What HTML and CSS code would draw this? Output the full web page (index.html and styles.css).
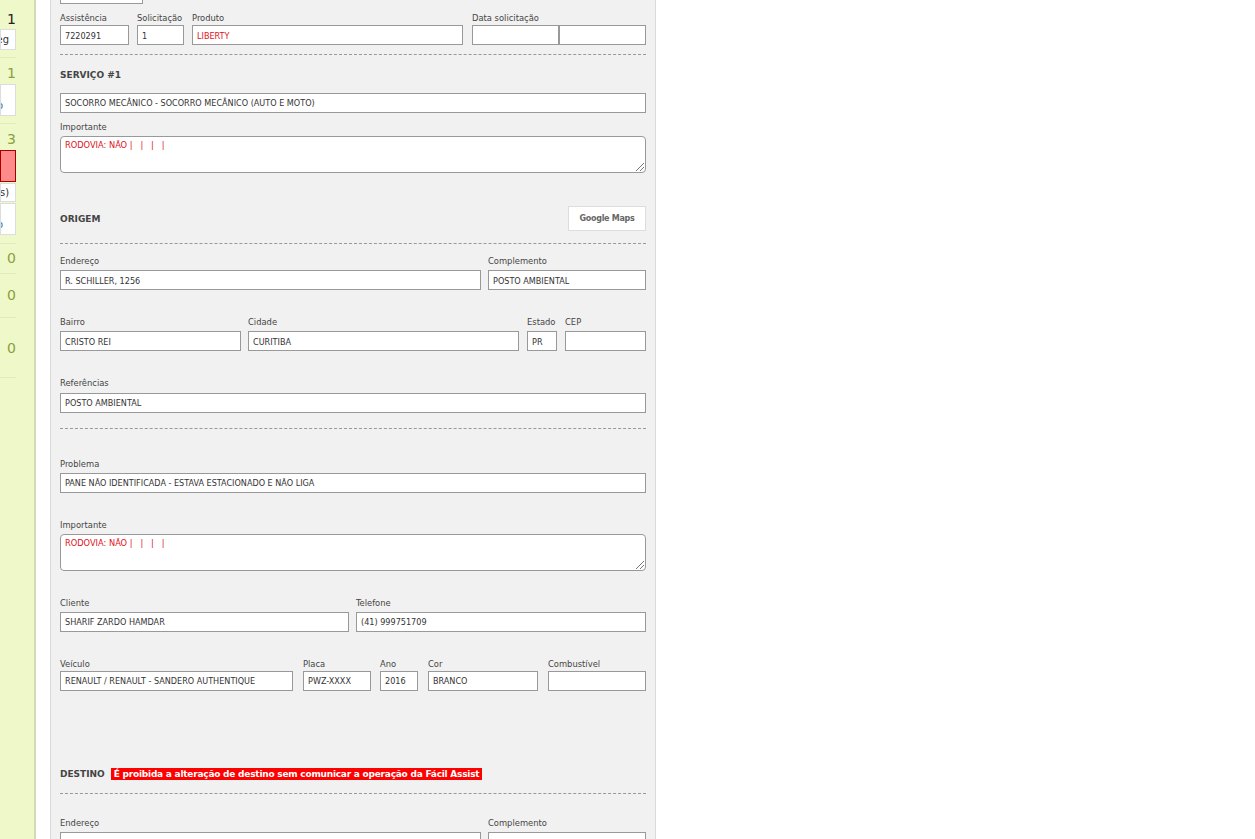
FILE: index.html
```html
<!DOCTYPE html>
<html lang="pt-BR">
<head>
<meta charset="utf-8">
<title>Serviço</title>
<link rel="stylesheet" href="styles.css">
</head>
<body>
<div class="page">
  <aside class="side">
    <section class="side-group g1">
      <div class="count dark">1</div>
      <div class="sbox h21"><span>Seg</span></div>
    </section>
    <section class="side-group g2">
      <div class="count">1</div>
      <div class="sbox h32 low"><span class="blue">o</span></div>
    </section>
    <section class="side-group g3">
      <div class="count">3</div>
      <div class="sbox h32 red"></div>
      <div class="sbox h19"><span>(s)</span></div>
      <div class="sbox h32 low"><span class="blue">o</span></div>
    </section>
    <section class="side-group g4"><div class="count">0</div></section>
    <section class="side-group g5"><div class="count">0</div></section>
    <section class="side-group g6"><div class="count">0</div></section>
  </aside>
  <main class="panel">
    <div class="r-top">
      <div class="stub"></div>
    </div>
    <div class="row r1 tight nudge">
      <div class="field w69"><label>Assistência</label><div class="inp">7220291</div></div>
      <div class="field w47 ml8"><label>Solicitação</label><div class="inp">1</div></div>
      <div class="field w271 ml8"><label>Produto</label><div class="inp redtxt">LIBERTY</div></div>
      <div class="field w174 ml9"><label>Data solicitação</label>
        <div class="pair"><div class="inp"></div><div class="inp"></div></div>
      </div>
    </div>
    <hr class="dash d1">
    <h3 class="title t-serv">SERVIÇO #1</h3>
    <div class="inp">SOCORRO MECÂNICO - SOCORRO MECÂNICO (AUTO E MOTO)</div>
    <div class="field f-imp1 mid"><label>Importante</label>
      <div class="area redtxt">RODOVIA: NÃO | &nbsp;&nbsp;| &nbsp;&nbsp;| &nbsp;&nbsp;|
        <svg class="grip" width="10" height="10" viewBox="0 0 10 10"><path d="M1 9 9 1M5 9 9 5" stroke="#777" stroke-width="1" fill="none"/></svg>
      </div>
    </div>
    <div class="head-row hr-orig">
      <h3 class="title">ORIGEM</h3>
      <button class="maps">Google Maps</button>
    </div>
    <hr class="dash d2">
    <div class="row r-end nudge">
      <div class="field w421"><label>Endereço</label><div class="inp">R. SCHILLER, 1256</div></div>
      <div class="field w158 ml7"><label>Complemento</label><div class="inp">POSTO AMBIENTAL</div></div>
    </div>
    <div class="row gap25 nudge">
      <div class="field w181"><label>Bairro</label><div class="inp">CRISTO REI</div></div>
      <div class="field w271 ml7"><label>Cidade</label><div class="inp">CURITIBA</div></div>
      <div class="field w30 ml8"><label>Estado</label><div class="inp">PR</div></div>
      <div class="field w81 ml8"><label>CEP</label><div class="inp"></div></div>
    </div>
    <div class="field gap25 loose"><label>Referências</label><div class="inp">POSTO AMBIENTAL</div></div>
    <hr class="dash d3">
    <div class="field f-prob"><label>Problema</label><div class="inp">PANE NÃO IDENTIFICADA - ESTAVA ESTACIONADO E NÃO LIGA</div></div>
    <div class="field gap25"><label>Importante</label>
      <div class="area redtxt">RODOVIA: NÃO | &nbsp;&nbsp;| &nbsp;&nbsp;| &nbsp;&nbsp;|
        <svg class="grip" width="10" height="10" viewBox="0 0 10 10"><path d="M1 9 9 1M5 9 9 5" stroke="#777" stroke-width="1" fill="none"/></svg>
      </div>
    </div>
    <div class="row gap25">
      <div class="field w289"><label>Cliente</label><div class="inp">SHARIF ZARDO HAMDAR</div></div>
      <div class="field w290 ml7"><label>Telefone</label><div class="inp">(41) 999751709</div></div>
    </div>
    <div class="row gap25 tight">
      <div class="field w233"><label>Veículo</label><div class="inp">RENAULT / RENAULT - SANDERO AUTHENTIQUE</div></div>
      <div class="field w68 ml10"><label>Placa</label><div class="inp">PWZ-XXXX</div></div>
      <div class="field w38 ml9"><label>Ano</label><div class="inp">2016</div></div>
      <div class="field w110 ml10"><label>Cor</label><div class="inp">BRANCO</div></div>
      <div class="field w98 ml10"><label>Combustível</label><div class="inp"></div></div>
    </div>
    <div class="head-row hr-dest">
      <h3 class="title">DESTINO</h3>
      <strong class="alert">É proibida a alteração de destino sem comunicar a operação da Fácil Assist</strong>
    </div>
    <hr class="dash d4">
    <div class="row r-end2">
      <div class="field w421"><label>Endereço</label><div class="inp"></div></div>
      <div class="field w158 ml7"><label>Complemento</label><div class="inp"></div></div>
    </div>
  </main>
</div>
</body>
</html>
```
FILE: styles.css
```css
* { box-sizing: border-box; }
html, body { margin: 0; height: 100%; overflow: hidden; background: #fff; }
body { font-family: "DejaVu Sans", sans-serif; font-stretch: condensed; font-size: 9px; color: #333; }

.page { display: flex; height: 839px; overflow: hidden; align-items: flex-start; }

.side { width: 36px; height: 839px; flex: none; background: #eff8c9; border-right: 2px solid #d3dbb4; padding-right: 18px; padding-top: 10px; margin-right: 14px; }
.side-group { border-bottom: 1px solid #e2eabf; }
.g1 { height: 48px; }
.g2 { height: 66px; padding-top: 6px; }
.g3 { height: 120px; padding-top: 6px; }
.g4 { height: 30px; padding-top: 5px; }
.g5 { height: 44px; padding-top: 12px; }
.g6 { height: 60px; padding-top: 21px; }
.count { font-size: 14px; line-height: 18px; text-align: right; color: #8d9e3c; font-stretch: normal; }
.count.dark { color: #222; }
.sbox { margin-top: 1px; background: #fff; border: 1px solid #ddd; display: flex; justify-content: flex-end; overflow: hidden; font-size: 11px; color: #333; white-space: nowrap; padding-right: 6px; align-items: center; }
.g2 .count + .sbox, .g3 .count + .sbox { margin-top: 2px; }
.h21 { height: 21px; }
.h32 { height: 32px; }
.h19 { height: 19px; }
.low { align-items: flex-end; padding-right: 12px; padding-bottom: 3px; }
.blue { color: #1c6f9f; }
.sbox.red { background: #ff8a8a; border-color: #a80000; }

.panel { width: 606px; height: 900px; flex: none; background: #f1f1f1; border-left: 1px solid #d9d9d9; border-right: 1px solid #d9d9d9; padding: 0 9px; margin-top: -4px; }

.row { display: flex; }
.r-top { height: 8px; }
.stub { width: 83px; height: 8px; background: #fff; border: 1px solid #999; }
label { display: block; font-size: 9.3px; line-height: 12px; color: #444; padding-top: 1px; margin-bottom: 3px; white-space: nowrap; }
.tight label { margin-bottom: 1px; }
.mid label { padding-top: 0; margin-bottom: 3px; }
.loose label { margin-bottom: 4px; }
.ml7 { margin-left: 7px; } .ml8 { margin-left: 8px; } .ml9 { margin-left: 9px; } .ml10 { margin-left: 10px; }
.w69 { width: 69px; } .w47 { width: 47px; } .w271 { width: 271px; } .w174 { width: 174px; }
.w421 { width: 421px; } .w158 { width: 158px; } .w181 { width: 181px; } .w30 { width: 30px; } .w81 { width: 81px; }
.w289 { width: 289px; } .w290 { width: 290px; } .w233 { width: 233px; } .w68 { width: 68px; } .w38 { width: 38px; } .w110 { width: 110px; } .w98 { width: 98px; }
.pair { display: flex; }
.pair .inp { flex: 1; }

.inp { height: 20px; background: #fff; border: 1px solid #999; font-size: 9px; line-height: 18px; padding: 0 4px; color: #333; white-space: nowrap; overflow: hidden; }
.nudge .inp { padding-top: 1px; }
.inp.redtxt { color: #e0101c; }
.area { position: relative; height: 37px; background: #fff; border: 1px solid #999; border-radius: 4px; font-size: 9.2px; line-height: 12px; padding: 2px 4px; white-space: nowrap; }
.area.redtxt { color: #e0101c; }
.grip { position: absolute; right: 0; bottom: 0; }

.dash { border: 0; border-top: 1px dashed #999; margin: 0; height: 0; }
.title { margin: 0; font-size: 9px; font-weight: bold; font-stretch: normal; color: #444; line-height: 12px; }

.r1 { margin-top: 7px; }
.d1 { margin-top: 9px; }
.t-serv { margin-top: 14px; margin-bottom: 12px; }
.f-imp1 { margin-top: 8px; }
.head-row { display: flex; align-items: center; }
.hr-orig { justify-content: space-between; margin-top: 33px; height: 25px; }
.maps { width: 78px; height: 25px; background: #fff; border: 1px solid #ddd; font: bold 8px "DejaVu Sans", sans-serif; letter-spacing: -0.3px; color: #666; padding: 0; }
.d2 { margin-top: 12px; }
.r-end { margin-top: 10px; }
.gap25 { margin-top: 25px; }
.d3 { margin-top: 15px; }
.f-prob { margin-top: 28px; }
.hr-dest { margin-top: 77px; gap: 6px; }
.alert { background: #f00; color: #fff; font-size: 9px; font-stretch: normal; letter-spacing: -0.23px; line-height: 12px; padding: 0 3px; }
.d4 { margin-top: 13px; }
.r-end2 { margin-top: 22px; }
```
